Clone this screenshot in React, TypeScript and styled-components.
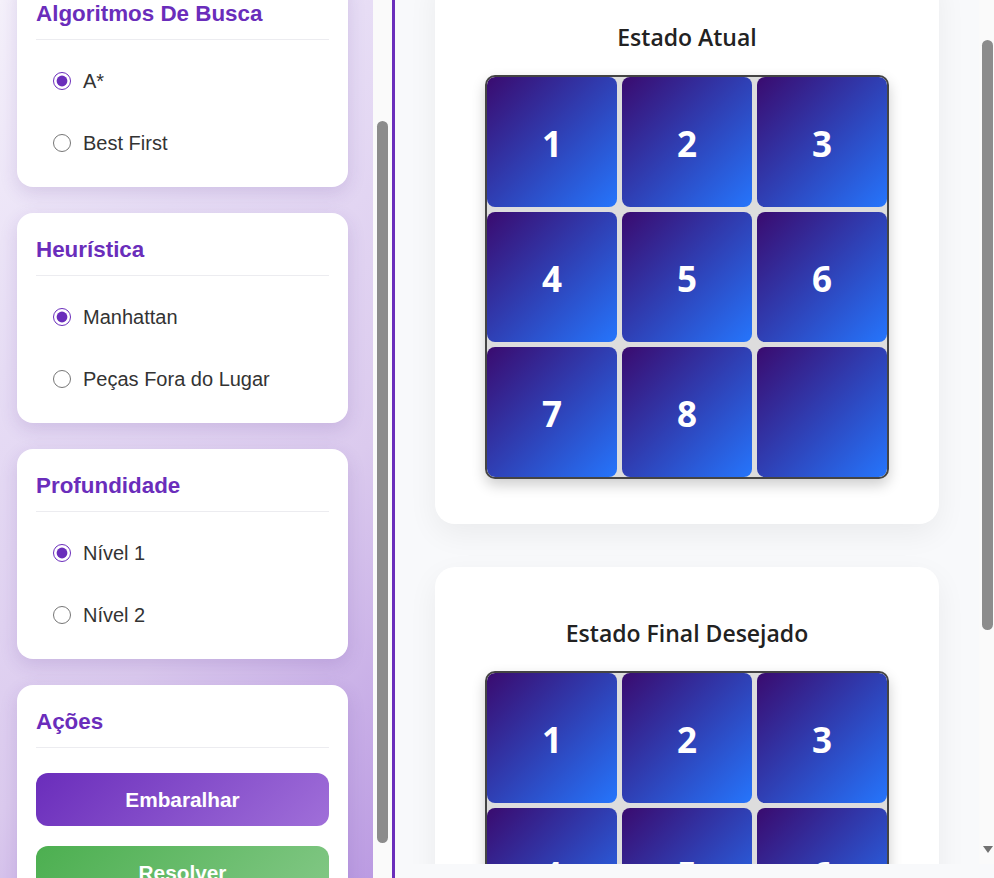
import { useLayoutEffect, useRef, useState } from "react";
import type { RefObject } from "react";
import styled, { createGlobalStyle } from "styled-components";

const GlobalStyle = createGlobalStyle`
    html, body {
        margin: 0;
        height: 100%;
        overflow: hidden;
    }
    body {
        font-family: "Liberation Sans", Arial, sans-serif;
        background: #f8f9fb;
    }
    #root {
        height: 100%;
    }
`;

const Layout = styled.div`
    display: flex;
    height: 100vh;
`;

const Sidebar = styled.aside`
    flex: 0 0 395px;
    box-sizing: border-box;
    height: 100%;
    display: flex;
    border-right: 3px solid #6a2dbb;
`;

const ScrollPane = styled.div`
    flex: 1;
    min-width: 0;
    height: 100%;
    overflow-y: scroll;
    scrollbar-width: none;
    &::-webkit-scrollbar {
        display: none;
    }
`;

const SidePane = styled(ScrollPane)`
    background: linear-gradient(
        135deg,
        #f5f1fb 0%,
        #e7ddf5 30%,
        #dbcaee 65%,
        #bb9be2 100%
    );
`;

const Track = styled.div<{ $width: number }>`
    flex: 0 0 ${(p) => p.$width}px;
    display: flex;
    flex-direction: column;
    background: #fafafa;
`;

const ThumbArea = styled.div`
    position: relative;
    flex: 1;
`;

const Thumb = styled.div<{ $left: number; $right: number }>`
    position: absolute;
    left: ${(p) => p.$left}px;
    right: ${(p) => p.$right}px;
    background: #8c8c8c;
    border-radius: 6px;
`;

const ArrowButton = styled.div`
    flex: 0 0 22px;
    box-sizing: border-box;
    display: flex;
    justify-content: center;
    padding: 4px 0 0 2px;
    &::after {
        content: "";
        border-left: 5px solid transparent;
        border-right: 5px solid transparent;
        border-top: 7px solid #717171;
    }
`;

const SidebarInner = styled.div`
    display: flex;
    flex-direction: column;
    gap: 26px;
    padding: 20px 25px 0 17px;
`;

const SidebarHeader = styled.header`
    padding: 5px 19px 15px;
    color: #6a2dbb;
`;

const AppTitle = styled.h1`
    margin: 0 0 8px;
    font-size: 28px;
`;

const AppSubtitle = styled.p`
    margin: 0;
    font-size: 16px;
    color: #555;
`;

const Panel = styled.section`
    flex-shrink: 0;
    background: #fff;
    border-radius: 16px;
    padding: 23px 19px 22px;
    box-shadow: 0 6px 18px rgba(80, 40, 140, 0.15);
`;

const PanelTitle = styled.h3`
    margin: 0;
    padding-bottom: 12px;
    border-bottom: 1px solid #ececf0;
    font-size: 22.4px;
    line-height: 27px;
    font-weight: 700;
    color: #6a2dbb;
`;

const OptionList = styled.div`
    display: flex;
    flex-direction: column;
    gap: 18px;
    margin-top: 19px;
`;

const Option = styled.label`
    display: flex;
    align-items: center;
    gap: 12px;
    height: 44px;
    padding-left: 17px;
    font-size: 20px;
    color: #333;
    cursor: pointer;
`;

const Radio = styled.input`
    width: 18px;
    height: 18px;
    margin: 0;
    accent-color: #6a2dbb;
`;

const ButtonList = styled.div`
    display: flex;
    flex-direction: column;
    gap: 20px;
    margin-top: 25px;
`;

const ActionButton = styled.button<{ $variant: "purple" | "green" }>`
    height: 53px;
    border: 0;
    border-radius: 12px;
    color: #fff;
    font-family: "Liberation Sans", Arial, sans-serif;
    font-size: 20.8px;
    font-weight: 700;
    cursor: pointer;
    background: ${(p) =>
        p.$variant === "purple"
            ? "linear-gradient(135deg, #6a2dbb 0%, #a06fd9 100%)"
            : "linear-gradient(135deg, #4caf50 0%, #83c886 100%)"};
`;

const Main = styled.main`
    flex: 1;
    min-width: 0;
    display: flex;
    padding-bottom: 14px;
    background: #f8f9fb;
`;

const MainPane = styled(ScrollPane)`
    display: flex;
    flex-direction: column;
    gap: 43px;
    padding: 29px 40px 55px;
    box-sizing: border-box;
`;

const BoardCard = styled.section`
    flex-shrink: 0;
    background: #fff;
    border-radius: 20px;
    padding: 50px 40px 45px;
    box-shadow: 0 10px 30px rgba(0, 0, 0, 0.06);
`;

const BoardTitle = styled.h2`
    margin: 0 0 22px;
    text-align: center;
    font-family: "Open Sans", "Noto Sans", sans-serif;
    font-size: 23px;
    line-height: 32px;
    font-weight: 600;
    color: #222;
`;

const Board = styled.div`
    display: grid;
    grid-template-columns: repeat(3, 130px);
    grid-auto-rows: 130px;
    gap: 5px;
    width: fit-content;
    margin: 0 auto;
    border: 2px solid #444;
    border-radius: 10px;
    background: #ddd;
    overflow: hidden;
    box-shadow: 0 6px 14px rgba(0, 0, 0, 0.2);
`;

const Tile = styled.div`
    display: flex;
    align-items: center;
    justify-content: center;
    padding-top: 3px;
    border-radius: 8px;
    background: linear-gradient(135deg, #3a0b6f 0%, #2f40b5 50%, #2575fc 100%);
    color: #fff;
    font-family: "Open Sans", "Noto Sans", sans-serif;
    font-size: 35px;
    font-weight: 700;
`;

const groups = [
    { name: "algoritmo", title: "Algoritmos De Busca", options: ["A*", "Best First"] },
    { name: "heuristica", title: "Heurística", options: ["Manhattan", "Peças Fora do Lugar"] },
    { name: "profundidade", title: "Profundidade", options: ["Nível 1", "Nível 2"] },
];

const solved = [1, 2, 3, 4, 5, 6, 7, 8, 0];

type ThumbPos = { top: number; height: number };

function measure(pane: HTMLElement | null, area: HTMLElement | null): ThumbPos {
    if (!pane || !area) return { top: 0, height: 0 };
    const h = area.clientHeight;
    return {
        top: (pane.scrollTop / pane.scrollHeight) * h,
        height: (pane.clientHeight / pane.scrollHeight) * h,
    };
}

function scrollToShow(pane: HTMLElement | null, target: HTMLElement | null, cut: number) {
    if (!pane || !target) return;
    const d = target.getBoundingClientRect().top - pane.getBoundingClientRect().top;
    pane.scrollTop = pane.scrollTop + d + cut;
}

export default function App() {
    const [choice, setChoice] = useState<Record<string, string>>({
        algoritmo: "A*",
        heuristica: "Manhattan",
        profundidade: "Nível 1",
    });
    const [board] = useState(solved);
    const sideRef = useRef<HTMLDivElement>(null);
    const sideAreaRef = useRef<HTMLDivElement>(null);
    const firstPanelRef = useRef<HTMLElement>(null);
    const mainRef = useRef<HTMLDivElement>(null);
    const mainAreaRef = useRef<HTMLDivElement>(null);
    const firstCardRef = useRef<HTMLElement>(null);
    const [sideThumb, setSideThumb] = useState<ThumbPos>({ top: 0, height: 0 });
    const [mainThumb, setMainThumb] = useState<ThumbPos>({ top: 0, height: 0 });

    const sync = (pane: RefObject<HTMLDivElement | null>, area: RefObject<HTMLDivElement | null>, set: (t: ThumbPos) => void) =>
        () => set(measure(pane.current, area.current));

    // start both panes at the same scroll offsets as the screenshot
    useLayoutEffect(() => {
        scrollToShow(sideRef.current, firstPanelRef.current, 23);
        scrollToShow(mainRef.current, firstCardRef.current, 29);
        setSideThumb(measure(sideRef.current, sideAreaRef.current));
        setMainThumb(measure(mainRef.current, mainAreaRef.current));
    }, []);

    return (
        <>
            <GlobalStyle />
            <Layout>
                <Sidebar>
                    <SidePane ref={sideRef} onScroll={sync(sideRef, sideAreaRef, setSideThumb)}>
                        <SidebarInner>
                            <SidebarHeader>
                                <AppTitle>Quebra-Cabeça 8</AppTitle>
                                <AppSubtitle>Escolha as opções de busca</AppSubtitle>
                            </SidebarHeader>
                            {groups.map((g, i) => (
                                <Panel key={g.name} ref={i === 0 ? firstPanelRef : undefined}>
                                    <PanelTitle>{g.title}</PanelTitle>
                                    <OptionList>
                                        {g.options.map((o) => (
                                            <Option key={o}>
                                                <Radio
                                                    type="radio"
                                                    name={g.name}
                                                    checked={choice[g.name] === o}
                                                    onChange={() => setChoice({ ...choice, [g.name]: o })}
                                                />
                                                {o}
                                            </Option>
                                        ))}
                                    </OptionList>
                                </Panel>
                            ))}
                            <Panel>
                                <PanelTitle>Ações</PanelTitle>
                                <ButtonList>
                                    <ActionButton $variant="purple">Embaralhar</ActionButton>
                                    <ActionButton $variant="green">Resolver</ActionButton>
                                </ButtonList>
                            </Panel>
                        </SidebarInner>
                    </SidePane>
                    <Track $width={19}>
                        <ThumbArea ref={sideAreaRef}>
                            <Thumb $left={4} $right={4} style={{ top: sideThumb.top, height: sideThumb.height }} />
                        </ThumbArea>
                    </Track>
                </Sidebar>
                <Main>
                    <MainPane ref={mainRef} onScroll={sync(mainRef, mainAreaRef, setMainThumb)}>
                        <BoardCard ref={firstCardRef}>
                            <BoardTitle>Estado Atual</BoardTitle>
                            <Board>
                                {board.map((n) => (
                                    <Tile key={n}>{n || ""}</Tile>
                                ))}
                            </Board>
                        </BoardCard>
                        <BoardCard>
                            <BoardTitle>Estado Final Desejado</BoardTitle>
                            <Board>
                                {solved.map((n) => (
                                    <Tile key={n}>{n || ""}</Tile>
                                ))}
                            </Board>
                        </BoardCard>
                    </MainPane>
                    <Track $width={15}>
                        <ThumbArea ref={mainAreaRef}>
                            <Thumb $left={3} $right={1} style={{ top: mainThumb.top, height: mainThumb.height }} />
                        </ThumbArea>
                        <ArrowButton />
                    </Track>
                </Main>
            </Layout>
        </>
    );
}
